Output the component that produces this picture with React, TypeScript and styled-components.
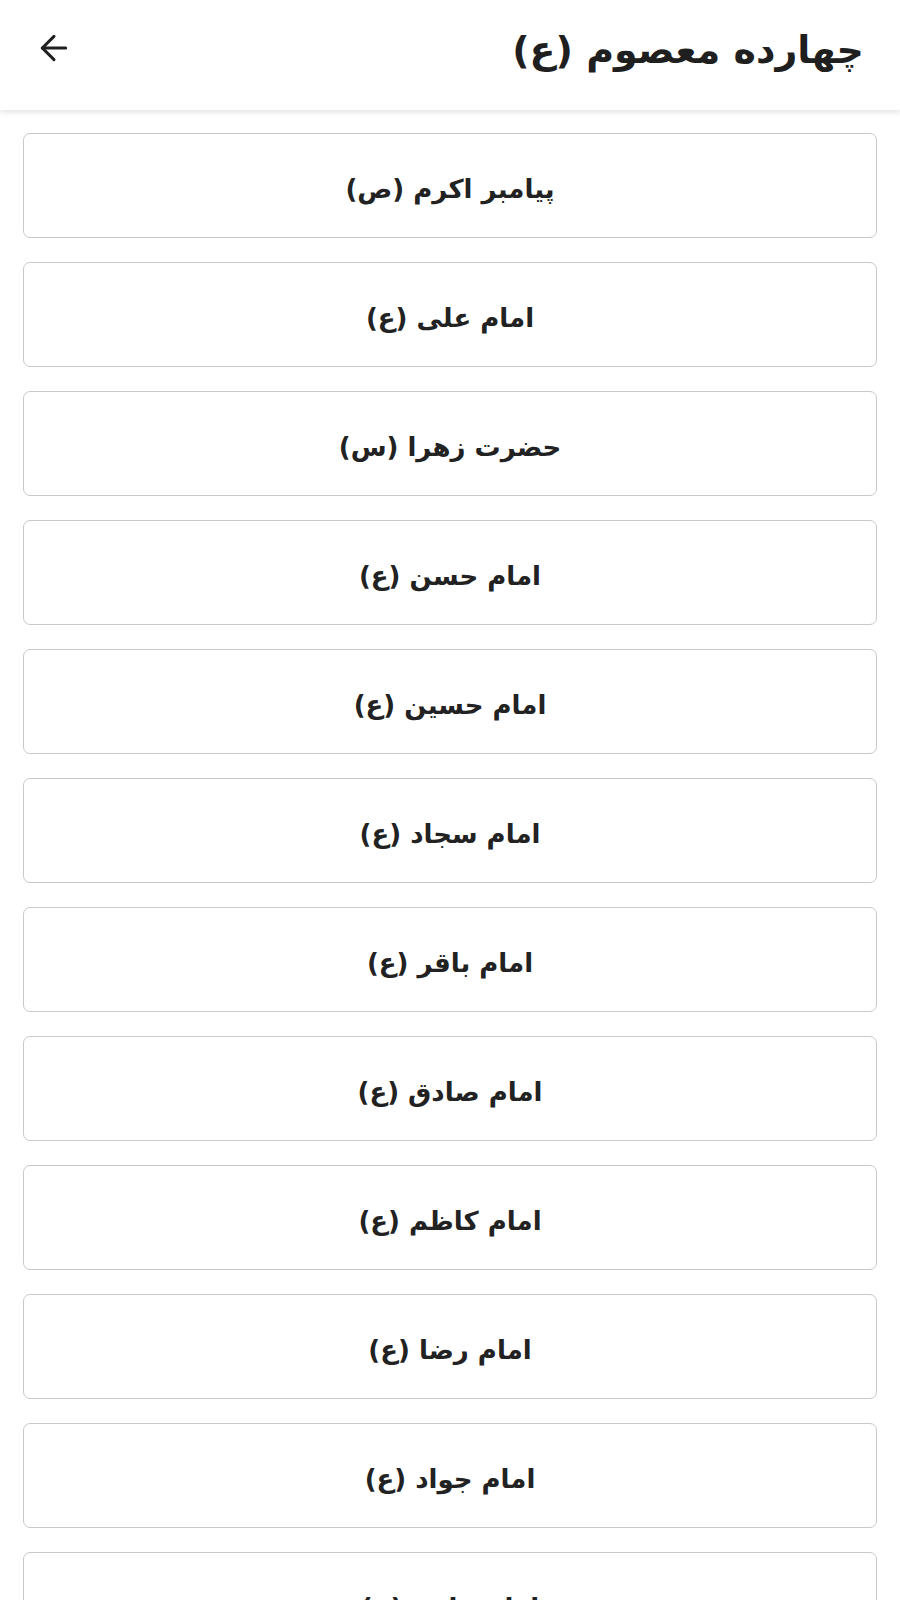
import React from "react";
import styled, { createGlobalStyle } from "styled-components";

const GlobalStyle = createGlobalStyle`
  html, body {
    margin: 0;
    padding: 0;
    background: #ffffff;
  }
  body {
    font-family: "DejaVu Sans", "Noto Sans", sans-serif;
  }
`;

const Page = styled.div`
  min-height: 100vh;
  width: 100%;
  background: #ffffff;
  direction: rtl;
`;

const Header = styled.header`
  height: 110px;
  display: flex;
  align-items: center;
  justify-content: space-between;
  padding: 0 36px 0 34px;
  box-sizing: border-box;
  background: #ffffff;
  box-shadow: 0 2px 6px rgba(0, 0, 0, 0.12);
  position: relative;
  z-index: 1;
`;

const Title = styled.h1`
  margin: 0;
  font-size: 38px;
  font-weight: 700;
  color: #1f1f1f;
  line-height: 1;
  padding-bottom: 10px;
`;

const BackButton = styled.button`
  border: none;
  background: none;
  padding: 0 0 14px;
  display: flex;
  align-items: center;
  justify-content: center;
  color: #1f1f1f;
  cursor: pointer;
`;

const List = styled.div`
  display: flex;
  flex-direction: column;
  gap: 24px;
  padding: 23px 23px 24px;
`;

const Item = styled.button`
  height: 105px;
  width: 100%;
  box-sizing: border-box;
  border: 1.5px solid #c9c9c9;
  border-radius: 7px;
  background: #ffffff;
  display: flex;
  align-items: center;
  justify-content: center;
  padding: 6px 0 0;
  font-family: "DejaVu Sans", "Noto Sans", sans-serif;
  font-size: 26px;
  font-weight: 700;
  color: #222222;
  direction: rtl;
  cursor: pointer;
`;

const items = [
  "پیامبر اکرم (ص)",
  "امام علی (ع)",
  "حضرت زهرا (س)",
  "امام حسن (ع)",
  "امام حسین (ع)",
  "امام سجاد (ع)",
  "امام باقر (ع)",
  "امام صادق (ع)",
  "امام کاظم (ع)",
  "امام رضا (ع)",
  "امام جواد (ع)",
  "امام هادی (ع)",
  "امام حسن عسکری (ع)",
  "امام زمان (عج)",
];

const ArrowLeft = () => (
  <svg width="40" height="40" viewBox="0 0 24 24" fill="none" stroke="currentColor" strokeWidth="1.8" strokeLinecap="round" strokeLinejoin="round">
    <path d="M19 12H5" />
    <path d="M12 19l-7-7 7-7" />
  </svg>
);

const App = () => {
  return (
    <Page>
      <GlobalStyle />
      <Header>
        <Title>چهارده معصوم (ع)</Title>
        <BackButton aria-label="back">
          <ArrowLeft />
        </BackButton>
      </Header>
      <List>
        {items.map((name) => (
          <Item key={name}>{name}</Item>
        ))}
      </List>
    </Page>
  );
};

export default App;
